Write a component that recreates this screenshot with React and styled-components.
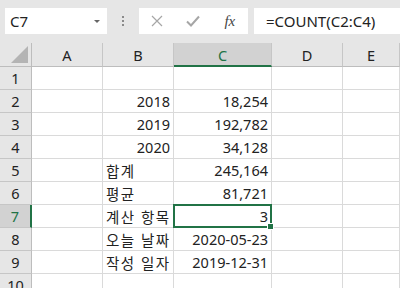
import React from 'react';
import styled, { createGlobalStyle, css } from 'styled-components';

const GlobalStyle = createGlobalStyle`
  html, body {
    margin: 0;
    padding: 0;
    background: #ffffff;
  }
  body {
    font-family: 'Noto Sans', 'Noto Sans CJK KR', sans-serif;
    overflow: hidden;
  }
`;

const GREEN = '#217346';

const Window = styled.div`
  width: 400px;
  height: 288px;
  overflow: hidden;
  background: #ffffff;
`;

const Toolbar = styled.div`
  display: flex;
  align-items: flex-start;
  height: 43px;
  padding: 8px 0 0 5px;
  box-sizing: border-box;
  background: #e6e6e6;
`;

const NameBox = styled.div`
  display: flex;
  align-items: center;
  justify-content: space-between;
  width: 102px;
  height: 26px;
  padding: 0 7px 0 5px;
  box-sizing: border-box;
  background: #ffffff;
  font-size: 15px;
  color: #222;
`;

const Caret = styled.span`
  width: 0;
  height: 0;
  border-left: 3px solid transparent;
  border-right: 3px solid transparent;
  border-top: 3px solid #666;
`;

const Grip = styled.div`
  display: flex;
  flex-direction: column;
  gap: 2px;
  width: 32px;
  align-items: center;
  padding-top: 8px;

  span {
    width: 2px;
    height: 2px;
    background: #8a8a8a;
  }
`;

const ActionBox = styled.div`
  display: flex;
  align-items: center;
  width: 109px;
  height: 26px;
  background: #ffffff;
`;

const ActionIcon = styled.div`
  width: 38px;
  display: flex;
  justify-content: center;
  align-items: center;
  color: ${(p) => (p.$muted ? '#a6a6a6' : '#444')};
`;

const Fx = styled.span`
  font-family: 'Liberation Serif', serif;
  font-style: italic;
  font-size: 15px;
  color: #444;
`;

const FormulaInput = styled.div`
  flex: 1;
  height: 26px;
  margin-left: 6px;
  padding-left: 12px;
  display: flex;
  align-items: center;
  background: #ffffff;
  font-size: 15px;
  color: #222;
`;

const Sheet = styled.div`
  display: grid;
  grid-template-columns: 32px 71px 71px 98px 71px 1fr;
  grid-auto-rows: 23px;
  grid-template-rows: 24px;
  font-size: 14.5px;
  color: #222;
`;

const Corner = styled.div`
  position: relative;
  background: #e6e6e6;
  border-right: 1px solid #bdbdbd;
  border-bottom: 1px solid #bdbdbd;
  box-sizing: border-box;

  &::after {
    content: '';
    position: absolute;
    right: 3px;
    bottom: 3px;
    width: 0;
    height: 0;
    border-left: 17px solid transparent;
    border-bottom: 17px solid #b4b4b4;
  }
`;

const ColHeader = styled.div`
  display: flex;
  align-items: center;
  justify-content: center;
  background: ${(p) => (p.$active ? '#d2d2d2' : '#e6e6e6')};
  color: ${(p) => (p.$active ? GREEN : '#222')};
  border-right: 1px solid #c6c6c6;
  border-bottom: ${(p) => (p.$active ? `2px solid ${GREEN}` : '1px solid #bdbdbd')};
  box-sizing: border-box;
  padding-top: ${(p) => (p.$active ? '1px' : '0')};
`;

const RowHeader = styled.div`
  display: flex;
  align-items: center;
  justify-content: center;
  background: ${(p) => (p.$active ? '#d2d2d2' : '#e6e6e6')};
  color: ${(p) => (p.$active ? GREEN : '#222')};
  border-right: ${(p) => (p.$active ? `2px solid ${GREEN}` : '1px solid #bdbdbd')};
  border-bottom: 1px solid #c6c6c6;
  box-sizing: border-box;
`;

const Cell = styled.div`
  position: relative;
  display: flex;
  align-items: center;
  justify-content: ${(p) => (p.$right ? 'flex-end' : 'flex-start')};
  padding: 0 3px;
  border-right: 1px solid #dadada;
  border-bottom: 1px solid #dadada;
  box-sizing: border-box;
  white-space: nowrap;
  font-family: 'Noto Sans', 'Noto Sans CJK KR', sans-serif;
  letter-spacing: ${(p) => (p.$kr ? '1.5px' : '0')};

  ${(p) =>
    p.$selected &&
    css`
      &::before {
        content: '';
        position: absolute;
        left: -1px;
        top: -1px;
        right: -1px;
        bottom: -1px;
        border: 2px solid ${GREEN};
        pointer-events: none;
      }
      &::after {
        content: '';
        position: absolute;
        right: -3px;
        bottom: -3px;
        width: 5px;
        height: 5px;
        background: ${GREEN};
        border: 1px solid #ffffff;
        z-index: 2;
      }
    `}
`;

const rows = [
  ['', ''],
  ['2018', '18,254'],
  ['2019', '192,782'],
  ['2020', '34,128'],
  ['합계', '245,164'],
  ['평균', '81,721'],
  ['계산 항목', '3'],
  ['오늘 날짜', '2020-05-23'],
  ['작성 일자', '2019-12-31'],
  ['', ''],
];

const columns = ['A', 'B', 'C', 'D', 'E'];

const isKorean = (s) => /[가-힣]/.test(s);

export default function App() {
  return (
    <Window>
      <GlobalStyle />
      <Toolbar>
        <NameBox>
          <span>C7</span>
          <Caret />
        </NameBox>
        <Grip>
          <span />
          <span />
          <span />
        </Grip>
        <ActionBox>
          <ActionIcon $muted>
            <svg width="12" height="12" viewBox="0 0 12 12">
              <path d="M1 1 L11 11 M11 1 L1 11" stroke="currentColor" strokeWidth="1.2" fill="none" />
            </svg>
          </ActionIcon>
          <ActionIcon $muted>
            <svg width="14" height="12" viewBox="0 0 14 12">
              <path d="M1 6.5 L5 10.5 L13 1.5" stroke="currentColor" strokeWidth="2" fill="none" />
            </svg>
          </ActionIcon>
          <ActionIcon>
            <Fx>fx</Fx>
          </ActionIcon>
        </ActionBox>
        <FormulaInput>=COUNT(C2:C4)</FormulaInput>
      </Toolbar>
      <Sheet>
        <Corner />
        {columns.map((c) => (
          <ColHeader key={c} $active={c === 'C'}>
            {c}
          </ColHeader>
        ))}
        {rows.map(([b, c], i) => {
          const n = i + 1;
          return (
            <React.Fragment key={n}>
              <RowHeader $active={n === 7}>{n}</RowHeader>
              <Cell />
              <Cell $right={!isKorean(b)} $kr={isKorean(b)}>
                {b}
              </Cell>
              <Cell $right $selected={n === 7}>
                {c}
              </Cell>
              <Cell />
              <Cell />
            </React.Fragment>
          );
        })}
      </Sheet>
    </Window>
  );
}
